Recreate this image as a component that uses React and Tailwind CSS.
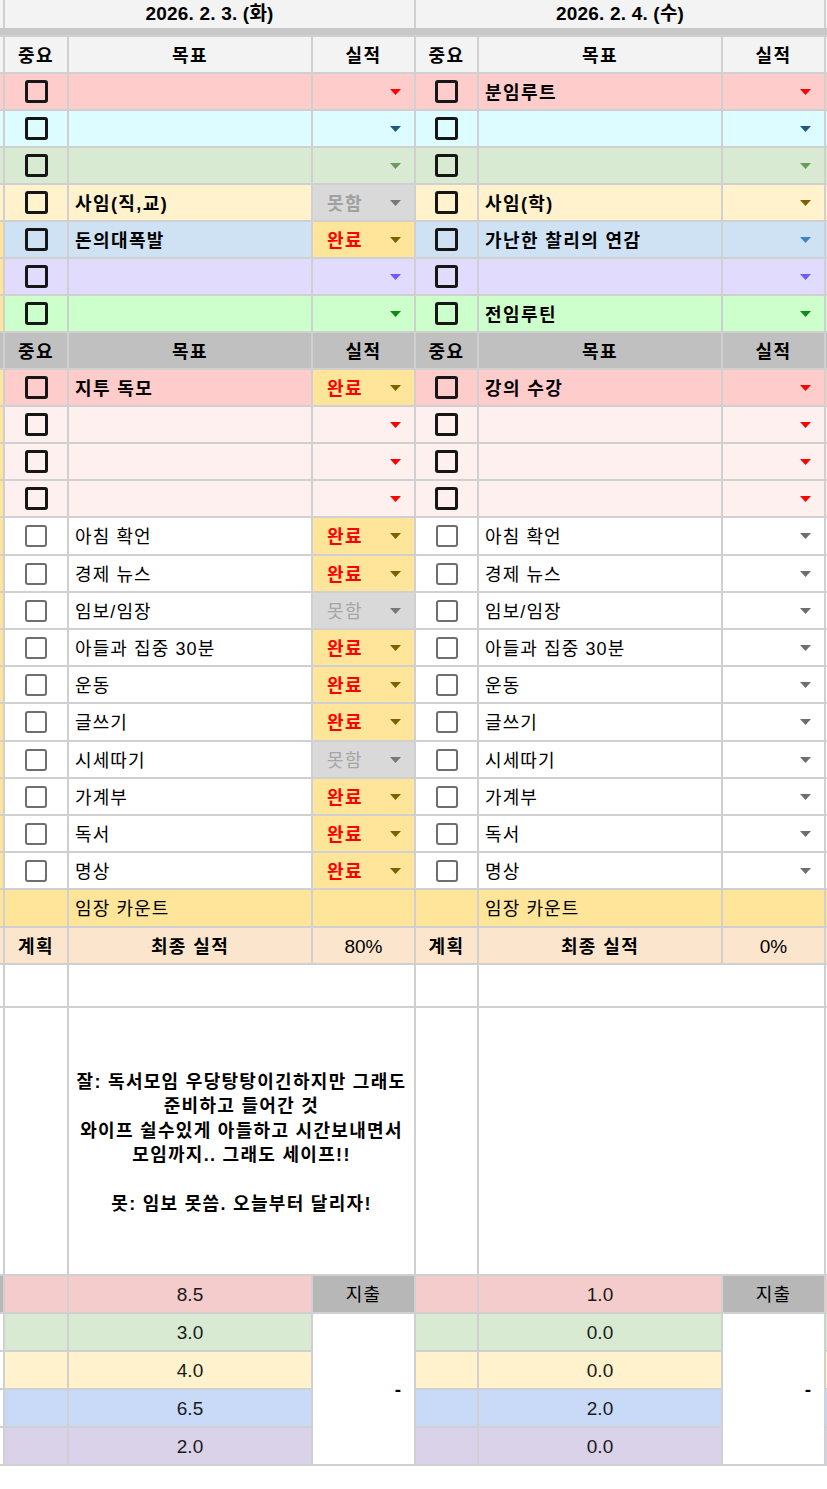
import React from 'react';

const GRID = 'grid grid-cols-[3px_62px_242px_101px_61px_242px_101px_1px] gap-x-[2px]';
const FONT = { fontFamily: '"Liberation Sans", "Noto Sans CJK KR", sans-serif' };

const topRows = [
  { bg: 'bg-[#ffcccc]', left: 'bg-[#ffcccc]', arrow: '#ff0000', d1: { text: '' }, d2: { text: '분임루트' } },
  { bg: 'bg-[#ddfcff]', left: 'bg-[#ddfcff]', arrow: '#1d5b87', d1: { text: '' }, d2: { text: '' } },
  { bg: 'bg-[#d9ead3]', left: 'bg-[#d9ead3]', arrow: '#6a9a60', d1: { text: '' }, d2: { text: '' } },
  { bg: 'bg-[#fff2cc]', left: 'bg-[#fff2cc]', arrow: '#7f6000', d1: { text: '사임(직,교)', status: 'fail' }, d2: { text: '사임(학)' } },
  { bg: 'bg-[#cfe2f3]', left: 'bg-[#ffe599]', arrow: '#3d85c6', d1: { text: '돈의대폭발', status: 'done' }, d2: { text: '가난한 찰리의 연감' } },
  { bg: 'bg-[#e1dcfd]', left: 'bg-[#ffe599]', arrow: '#6c5bff', d1: { text: '' }, d2: { text: '' } },
  { bg: 'bg-[#ccffcc]', left: 'bg-[#ffe599]', arrow: '#138a13', d1: { text: '' }, d2: { text: '전임루틴' } },
];

const midRows = [
  { bg: 'bg-[#ffcccc]', d1: { text: '지투 독모', status: 'done' }, d2: { text: '강의 수강' } },
  { bg: 'bg-[#fff0f0]', d1: { text: '' }, d2: { text: '' } },
  { bg: 'bg-[#fff0f0]', d1: { text: '' }, d2: { text: '' } },
  { bg: 'bg-[#fff0f0]', d1: { text: '' }, d2: { text: '' } },
];

// name, status on day 1, row height
const routines = [
  ['아침 확언', 'done', 'h-[36px]'],
  ['경제 뉴스', 'done', 'h-[35px]'],
  ['임보/임장', 'fail', 'h-[35px]'],
  ['아들과 집중 30분', 'done', 'h-[35px]'],
  ['운동', 'done', 'h-[35px]'],
  ['글쓰기', 'done', 'h-[36px]'],
  ['시세따기', 'fail', 'h-[35px]'],
  ['가계부', 'done', 'h-[35px]'],
  ['독서', 'done', 'h-[35px]'],
  ['명상', 'done', 'h-[35px]'],
];

const totals = [
  { bg: 'bg-[#f4cccc]', d1: '8.5', d2: '1.0' },
  { bg: 'bg-[#d9ead3]', d1: '3.0', d2: '0.0' },
  { bg: 'bg-[#fff2cc]', d1: '4.0', d2: '0.0' },
  { bg: 'bg-[#c9daf8]', d1: '6.5', d2: '2.0' },
  { bg: 'bg-[#d9d2e9]', d1: '2.0', d2: '0.0' },
];

function Arrow({ color }) {
  return (
    <svg width="11" height="6" viewBox="0 0 11 6" className="shrink-0">
      <path d="M0 0H11L5.5 6Z" fill={color} />
    </svg>
  );
}

function Check({ bold }) {
  return (
    <div className={bold
      ? 'h-[23px] w-[23px] rounded-[3px] border-[3px] border-[#161616]'
      : 'h-[22px] w-[22px] rounded-[3px] border-2 border-[#6e6e6e]'}
    />
  );
}

function Status({ status, bg, arrow, bold }) {
  if (status === 'done') {
    return (
      <div className="flex items-center justify-between bg-[#ffe599] pl-[14px] pr-[13px]">
        <span className="pt-[3px] text-[18px] font-bold tracking-[1.5px] text-[#ff0000]">완료</span>
        <Arrow color="#7f6000" />
      </div>
    );
  }
  if (status === 'fail') {
    return (
      <div className="flex items-center justify-between bg-[#d9d9d9] pl-[14px] pr-[13px]">
        <span className={bold
          ? 'pt-[3px] text-[18px] font-bold tracking-[1.5px] text-[#a0a0a0]'
          : 'pt-[3px] text-[18px] tracking-[1.5px] text-[#a6a6a6]'}
        >
          못함
        </span>
        <Arrow color="#787878" />
      </div>
    );
  }
  return (
    <div className={`flex items-center justify-end pr-[13px] ${bg}`}>
      <Arrow color={arrow} />
    </div>
  );
}

function DayCells({ bg, item, arrow, bold }) {
  return (
    <>
      <div className={`flex items-center justify-center ${bg}`}>
        <Check bold={bold} />
      </div>
      <div className={`flex items-center whitespace-nowrap pl-[6px] pt-[3px] text-[18px] text-black ${bold ? 'font-bold tracking-[1.4px]' : 'tracking-[1.1px]'} ${bg}`}>
        {item.text}
      </div>
      <Status status={item.status} bg={bg} arrow={arrow} bold={bold} />
    </>
  );
}

function Heads({ bg }) {
  return (
    <>
      <div className={`flex items-center justify-center pt-[3px] text-[18px] font-bold tracking-[1.4px] ${bg}`}>중요</div>
      <div className={`flex items-center justify-center pt-[3px] text-[18px] font-bold tracking-[1.4px] ${bg}`}>목표</div>
      <div className={`flex items-center justify-center pt-[3px] text-[18px] font-bold tracking-[1.4px] ${bg}`}>실적</div>
    </>
  );
}

export default function App() {
  return (
    <div className="min-h-[1489px] w-[827px] bg-white text-black" style={FONT}>
      <div className="flex flex-col gap-y-[2px] bg-[#d0d0d0] pb-[2px]">
        {/* date header + frozen band */}
        <div className="flex flex-col">
          <div className={`${GRID} h-[28px]`}>
            <div className="bg-[#f3f3f3]" />
            <div className="col-span-3 flex items-center justify-center bg-[#f3f3f3] text-[19px] font-bold tracking-[0.2px]">2026. 2. 3. (화)</div>
            <div className="col-span-3 flex items-center justify-center bg-[#f3f3f3] text-[19px] font-bold tracking-[0.2px]">2026. 2. 4. (수)</div>
            <div className="bg-[#f3f3f3]" />
          </div>
          <div className="h-[7px] bg-[#c8c8c8]" />
        </div>

        <div className={`${GRID} h-[35px]`}>
          <div className="bg-[#f3f3f3]" />
          <Heads bg="bg-[#f3f3f3]" />
          <Heads bg="bg-[#f3f3f3]" />
          <div className="bg-[#f3f3f3]" />
        </div>

        {topRows.map((r, i) => (
          <div key={i} className={`${GRID} h-[35px]`}>
            <div className={r.left} />
            <DayCells bg={r.bg} item={r.d1} arrow={r.arrow} bold />
            <DayCells bg={r.bg} item={r.d2} arrow={r.arrow} bold />
            <div className={r.bg} />
          </div>
        ))}

        <div className={`${GRID} h-[35px]`}>
          <div className="bg-[#c0c0c0]" />
          <Heads bg="bg-[#c0c0c0]" />
          <Heads bg="bg-[#c0c0c0]" />
          <div className="bg-[#c0c0c0]" />
        </div>

        {midRows.map((r, i) => (
          <div key={i} className={`${GRID} h-[35px]`}>
            <div className="bg-[#ffe599]" />
            <DayCells bg={r.bg} item={r.d1} arrow="#ff0000" bold />
            <DayCells bg={r.bg} item={r.d2} arrow="#ff0000" bold />
            <div className={r.bg} />
          </div>
        ))}

        {routines.map(([name, st, h], i) => (
          <div key={i} className={`${GRID} ${h}`}>
            <div className="bg-[#ffe599]" />
            <DayCells bg="bg-white" item={{ text: name, status: st }} arrow="#6e6e6e" />
            <DayCells bg="bg-white" item={{ text: name }} arrow="#6e6e6e" />
            <div className="bg-white" />
          </div>
        ))}

        {/* 임장 카운트 */}
        <div className={`${GRID} h-[36px]`}>
          <div className="bg-[#ffe599]" />
          {[0, 1].map((k) => (
            <React.Fragment key={k}>
              <div className="bg-[#ffe599]" />
              <div className="flex items-center bg-[#ffe599] pl-[6px] pt-[3px] text-[18px] tracking-[1.1px]">임장 카운트</div>
              <div className="bg-[#ffe599]" />
            </React.Fragment>
          ))}
          <div className="bg-[#ffe599]" />
        </div>

        {/* 최종 실적 */}
        <div className={`${GRID} h-[35px]`}>
          <div className="bg-[#fce5cd]" />
          {['80%', '0%'].map((v) => (
            <React.Fragment key={v}>
              <div className="flex items-center justify-center bg-[#fce5cd] pt-[3px] text-[18px] font-bold tracking-[1.4px]">계획</div>
              <div className="flex items-center justify-center bg-[#fce5cd] pt-[3px] text-[18px] font-bold tracking-[1.4px]">최종 실적</div>
              <div className="flex items-center justify-center bg-[#fce5cd] pt-[3px] text-[19px]">{v}</div>
            </React.Fragment>
          ))}
          <div className="bg-[#fce5cd]" />
        </div>

        {/* blank row */}
        <div className={`${GRID} h-[41px]`}>
          <div className="bg-white" />
          <div className="bg-white" />
          <div className="col-span-2 bg-white" />
          <div className="bg-white" />
          <div className="col-span-2 bg-white" />
          <div className="bg-white" />
        </div>

        {/* review */}
        <div className={`${GRID} h-[266px]`}>
          <div className="bg-white" />
          <div className="bg-white" />
          <div className="col-span-2 flex items-center justify-center whitespace-nowrap bg-white pt-[4px] text-center text-[18px] font-bold leading-[24.5px] tracking-[1.3px]">
            <p>
              잘: 독서모임 우당탕탕이긴하지만 그래도<br />
              준비하고 들어간 것<br />
              와이프 쉴수있게 아들하고 시간보내면서<br />
              모임까지.. 그래도 세이프!!<br />
              <br />
              못: 임보 못씀. 오늘부터 달리자!
            </p>
          </div>
          <div className="bg-white" />
          <div className="col-span-2 bg-white" />
          <div className="bg-white" />
        </div>

        {/* totals */}
        <div className={`${GRID} grid-rows-[36px_36px_36px_36px_36px] gap-y-[2px]`}>
          {totals.map((t, i) => (
            <React.Fragment key={i}>
              <div className={i === 0 ? 'bg-[#b7b7b7]' : 'bg-white'} />
              <div className={t.bg} />
              <div className={`flex items-center justify-center pt-[3px] text-[19px] text-[#1a1a1a] ${t.bg}`}>{t.d1}</div>
              {i === 0 && <div className="flex items-center justify-center bg-[#b7b7b7] pt-[3px] text-[18px] tracking-[1.1px]">지출</div>}
              {i === 1 && <div className="row-span-4 flex items-center justify-end bg-white pr-[13px] pt-[3px] text-[19px] font-bold">-</div>}
              <div className={t.bg} />
              <div className={`flex items-center justify-center pt-[3px] text-[19px] text-[#1a1a1a] ${t.bg}`}>{t.d2}</div>
              {i === 0 && <div className="flex items-center justify-center bg-[#b7b7b7] pt-[3px] text-[18px] tracking-[1.1px]">지출</div>}
              {i === 1 && <div className="row-span-4 flex items-center justify-end bg-white pr-[13px] pt-[3px] text-[19px] font-bold">-</div>}
              <div className={t.bg} />
            </React.Fragment>
          ))}
        </div>
      </div>
    </div>
  );
}
